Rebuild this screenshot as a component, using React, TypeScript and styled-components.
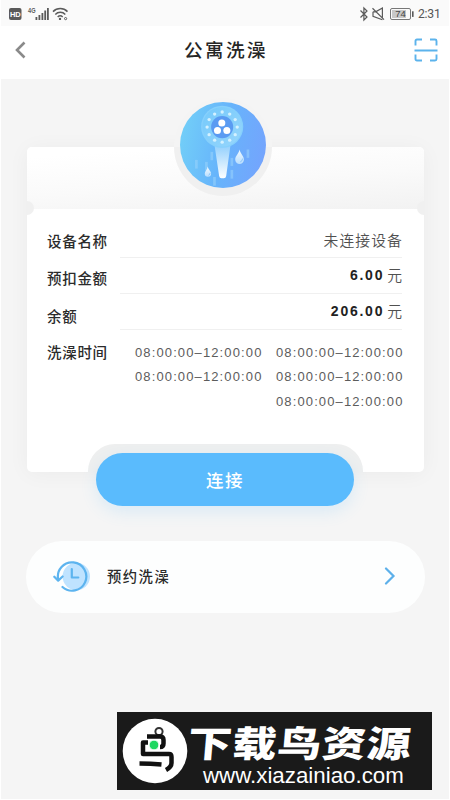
import React from "react";
import styled, { createGlobalStyle } from "styled-components";

const GlobalStyle = createGlobalStyle`
  * { box-sizing: border-box; }
  body { margin: 0; background: #fff; }
`;

const cjk = `"Noto Sans CJK SC", sans-serif`;
const latin = `"Liberation Sans", "Noto Sans CJK SC", sans-serif`;

const Screen = styled.div`
  width: 450px;
  height: 799px;
  padding: 0 1px 0 1px;
  background: #fff;
  font-family: ${cjk};
  color: #2b2b2b;
  overflow: hidden;
`;
const StatusBar = styled.div`
  display: flex;
  justify-content: space-between;
  align-items: center;
  height: 26px;
  padding: 2px 9px 0 8px;
  background: #fafafa;
`;
const StatusGroup = styled.div`
  display: flex;
  align-items: center;
`;
const Clock = styled.span`
  margin-left: 3px;
  width: 22px;
  font: 12.2px/16px Roboto, sans-serif;
  letter-spacing: -0.25px;
  color: #565656;
  white-space: nowrap;
`;
const NavBar = styled.header`
  display: grid;
  grid-template-columns: 40px 1fr 40px;
  align-items: center;
  height: 53px;
  padding: 0 11px 6px 13px;
  background: #fff;
`;
const Title = styled.h1`
  margin: -1px 0 0;
  text-align: center;
  font-size: 18.6px;
  line-height: 28px;
  font-weight: 500;
  letter-spacing: 2.4px;
  color: #262626;
`;
const IconButton = styled.button<{ $end?: boolean }>`
  display: flex;
  justify-content: ${(p) => (p.$end ? "flex-end" : "flex-start")};
  padding: 0;
  border: 0;
  background: none;
`;
const Body = styled.main`
  height: 720px;
  padding: 68px 23px 0 26px;
  background: #f5f5f5;
`;
const Ticket = styled.section`
  position: relative;
  width: 397px;
  height: 325px;
  border-radius: 5px;
  background: #fff;
  box-shadow: 0 2px 22px rgba(0, 0, 0, 0.045);
`;
const TicketTop = styled.div`
  position: relative;
  height: 62px;
  border-radius: 5px 5px 0 0;
  background: linear-gradient(176deg, #fff 12%, #fafafa 55%, #f2f2f2 100%);
`;
const Notch = styled.span<{ $side: "left" | "right" }>`
  position: absolute;
  top: 54px;
  ${(p) => p.$side}: 0;
  width: 7px;
  height: 14px;
  background: #f0f0f0;
  border-radius: ${(p) => (p.$side === "left" ? "0 7px 7px 0" : "7px 0 0 7px")};
`;
const Medallion = styled.div`
  position: absolute;
  left: 147px;
  top: -49px;
  width: 98px;
  height: 98px;
  padding: 4px 0 0 6px;
  border-radius: 50%;
  background: linear-gradient(#f4f4f4 50%, #f0f0f0 50%);
`;
const Details = styled.div`
  padding: 12px 22px 0 20px;
`;
const Row = styled.div<{ $h: number }>`
  display: grid;
  grid-template-columns: 73px 1fr;
  height: ${(p) => p.$h}px;
`;
const Label = styled.span<{ $top: number }>`
  padding-top: ${(p) => p.$top}px;
  font-size: 14.5px;
  line-height: 22px;
  font-weight: 500;
  letter-spacing: 0.7px;
  white-space: nowrap;
`;
const Value = styled.div`
  display: flex;
  justify-content: flex-end;
  align-items: center;
  border-bottom: 1px solid #f0f0f0;
  padding-top: 2px;
  font-size: 14.8px;
  line-height: 20px;
  letter-spacing: 1.1px;
  font-weight: 350;
  color: #505050;
`;
const DeviceName = styled.span`
  margin-right: -1px;
`;
const AmountValue = styled(Value)`
  padding: 0 0 1px;
  letter-spacing: 0;
`;
const Amount = styled.b`
  margin-right: 3px;
  font: 700 14px/20px ${latin};
  letter-spacing: 1.75px;
  color: #222;
`;
const Times = styled.div`
  display: grid;
  grid-template-columns: 127px 127px;
  justify-content: start;
  column-gap: 14px;
  align-content: start;
  grid-auto-rows: 24.4px;
  padding-top: 11px;
  margin-right: -1px;
  direction: rtl;
`;
const Time = styled.span`
  direction: ltr;
  font: 13px/24px ${latin};
  letter-spacing: 1.12px;
  color: #5c5c5c;
  white-space: nowrap;
`;
const ButtonHalo = styled.div`
  position: absolute;
  left: 61px;
  bottom: 0;
  width: 275px;
  height: 28px;
  border-radius: 27px 27px 0 0;
  background: #eeefef;
`;
const ConnectButton = styled.button`
  position: absolute;
  left: 69px;
  top: 306px;
  width: 258px;
  height: 53px;
  padding: 0;
  border: 0;
  border-radius: 27px;
  background: #5abbfd;
  box-shadow: 0 6px 16px rgba(90, 187, 253, 0.16);
  color: #fff;
  font: 500 17.5px/53px ${cjk};
  letter-spacing: 1.6px;
`;
const Reserve = styled.a`
  display: flex;
  align-items: center;
  width: 399px;
  height: 72px;
  margin: 69px 0 0 -1px;
  padding: 0 29px 2px 27px;
  border-radius: 36px;
  background: #fdfefe;
`;
const ReserveText = styled.span`
  flex: 1;
  margin-left: 16px;
  font-size: 14.3px;
  line-height: 22px;
  font-weight: 500;
  letter-spacing: 1.5px;
`;
const Banner = styled.footer`
  display: flex;
  align-items: center;
  width: 315px;
  height: 78px;
  margin: 99px 0 0 90px;
  padding-left: 5px;
  background: #1a1a1a;
  color: #fff;
`;
const BannerText = styled.div`
  margin: 4px 0 0;
  width: 230px;
`;
const BannerName = styled.div`
  font-size: 44px;
  line-height: 40px;
  font-weight: 900;
  letter-spacing: 0.8px;
  white-space: nowrap;
  transform: translateY(3px) skewX(-5deg) scaleY(0.82);
`;
const BannerUrl = styled.div`
  margin: 6px 0 0 15px;
  font: 22.3px/24px ${latin};
  white-space: nowrap;
`;

const SignalIcons = () => (
  <svg width="60" height="16" viewBox="0 0 60 16">
    <rect x="0" y="2" width="12.5" height="12" rx="2" fill="#5a5a5a" />
    <text x="6.3" y="10.9" textAnchor="middle" fontFamily="Liberation Sans" fontWeight="700" fontSize="7.5" fill="#fff">HD</text>
    <text x="19" y="6.6" fontFamily="Liberation Sans" fontWeight="700" fontSize="6.5" textLength="7.5" lengthAdjust="spacingAndGlyphs" fill="#5a5a5a">4G</text>
    <g fill="#5a5a5a">
      <rect x="26.5" y="11" width="1.8" height="3" />
      <rect x="29.5" y="9" width="1.8" height="5" />
      <rect x="32.5" y="7" width="1.8" height="7" />
      <rect x="35.3" y="4.5" width="1.8" height="9.5" />
      <rect x="38" y="2" width="1.8" height="12" />
    </g>
    <g fill="none" stroke="#5a5a5a" strokeWidth="1.5">
      <path d="M44 5.6a10.3 10.3 0 0 1 14.5 0M46.3 8.4a7 7 0 0 1 10 0M48.7 11a3.6 3.6 0 0 1 5 0" />
      <circle cx="56.6" cy="12.6" r="1.1" strokeWidth="1" />
    </g>
    <circle cx="51" cy="12.9" r="1.2" fill="#5a5a5a" />
  </svg>
);

const DeviceIcons = () => (
  <svg width="56" height="16" viewBox="0 0 56 16" fill="none" stroke="#5a5a5a" strokeWidth="1.2">
    <path d="M1.5 4.5 8 11 4.9 14V2L8 5 1.5 11.5" />
    <path d="M14 5.8h2.6L23.4 2v9.5M23.4 13.8 14 10.3V5.8M13.5 2.2 25 13.6" />
    <rect x="31.5" y="2.5" width="20" height="11" rx="1.5" stroke="#777" strokeWidth="1" />
    <rect x="33" y="4" width="14" height="8" fill="#c8c8c8" stroke="none" />
    <rect x="53" y="5.3" width="1.6" height="5.6" fill="#5a5a5a" stroke="none" />
    <text x="41.5" y="11.4" textAnchor="middle" fontFamily="Liberation Sans" fontSize="9.5" fill="#444" stroke="none">74</text>
  </svg>
);

const dots = Array.from({ length: 12 }, (_, i) => {
  const a = (i * Math.PI) / 6 + Math.PI / 2;
  return [173 + 45 * Math.cos(a), 111 + 45 * Math.sin(a)];
});

const ShowerIcon = () => (
  <svg width="86" height="86" viewBox="47 36 257 257">
    <defs>
      <linearGradient id="disc" x1="0" y1="0.4" x2="1" y2="0.6">
        <stop offset="0" stopColor="#72cef8" />
        <stop offset="0.5" stopColor="#67b4fb" />
        <stop offset="1" stopColor="#74a4fd" />
      </linearGradient>
      <linearGradient id="handle" x1="0" y1="0" x2="0" y2="1">
        <stop offset="0" stopColor="#91cffd" />
        <stop offset="1" stopColor="#fff" />
      </linearGradient>
      <linearGradient id="drop" x1="0" y1="0" x2="0" y2="1">
        <stop offset="0" stopColor="#f4fbff" />
        <stop offset="1" stopColor="#b9defe" />
      </linearGradient>
      <linearGradient id="head" x1="0" y1="0" x2="1" y2="1">
        <stop offset="0" stopColor="#74c9fb" />
        <stop offset="1" stopColor="#97d6fc" />
      </linearGradient>
    </defs>
    <circle cx="175.5" cy="164.5" r="128.5" fill="url(#disc)" />
    <g fill="#9bd4fc" opacity="0.55">
      <rect x="92" y="209" width="8" height="26" />
      <rect x="122" y="215" width="8" height="26" />
      <rect x="138" y="185" width="8" height="25" />
      <rect x="146" y="260" width="8" height="26" />
      <rect x="198" y="203" width="8" height="24" />
      <rect x="198" y="239" width="8" height="26" />
      <rect x="246" y="178" width="8" height="25" />
    </g>
    <path d="M150 164h48l-13 93q-1 7-7 7h-7q-6 0-7-7z" fill="url(#handle)" />
    <circle cx="173" cy="110" r="63" fill="#86d0fc" />
    <circle cx="173" cy="110" r="59" fill="url(#head)" />
    <circle cx="173" cy="111" r="33" fill="#5a9bf2" />
    {dots.map(([x, y], i) => (
      <circle key={i} cx={x} cy={y} r="5" fill="#d4f1ff" />
    ))}
    <g fill="#fff">
      <circle cx="172" cy="99" r="10.5" />
      <circle cx="159" cy="121" r="10.5" />
      <circle cx="187" cy="121" r="10.5" />
    </g>
    <path d="M225 178c-3 14-13 19-13 30a13 13 0 0 0 26 0c0-11-10-16-13-30z" fill="url(#drop)" />
    <path d="M130 229c-2 10-9 14-9 21a9.500 9.500 0 0 0 19 0c0-7-8-11-10-21z" fill="url(#drop)" />
    <path d="M234 205q0 8-7 10M137 248q0 5-5 7" fill="none" stroke="#6eb5f8" strokeWidth="2" />
  </svg>
);

const HistoryIcon = () => (
  <svg width="38" height="32" viewBox="0 0 38 32" fill="none" stroke="#5db4ef" strokeWidth="2.200" strokeLinecap="round" strokeLinejoin="round">
    <circle cx="23.300" cy="16.500" r="13.700" fill="#bfe3ff" stroke="none" />
    <path d="M5.200 19.500A14.200 14.200 0 1 1 9.500 27" />
    <path d="M1.300 16.700 5.200 20.600 9.600 16.500" />
    <path d="M18.800 9v8.500h6.500" />
  </svg>
);

const BirdLogo = () => (
  <svg width="66" height="66" viewBox="0 0 66 66">
    <circle cx="33" cy="33" r="32.300" fill="#fff" />
    <circle cx="37" cy="13.500" r="3.600" fill="none" stroke="#333" strokeWidth="2" />
    <g fill="none" stroke="#111" strokeWidth="4.500" strokeLinejoin="round">
      <path d="M25 18.500h13q3.500 0 3.500 3.500v3.500q0 3.500-3.500 3.500" />
      <path d="M26 24.500h-5v11.500h26q2.500 0 2.500 3v6q0 4-5.500 7" />
      <path d="M17.500 45.500q11 0 22 1" />
    </g>
    <circle cx="32" cy="27" r="4.800" fill="#1ed760" stroke="#fff" strokeWidth="0.800" />
  </svg>
);

const slots = [1, 2, 3, 4, 5];

export default function App() {
  return (
    <>
      <GlobalStyle />
      <Screen>
        <StatusBar>
          <StatusGroup><SignalIcons /></StatusGroup>
          <StatusGroup><DeviceIcons /><Clock>2:31</Clock></StatusGroup>
        </StatusBar>
        <NavBar>
          <IconButton aria-label="返回">
            <svg width="12" height="18" viewBox="0 0 12 18" fill="none" stroke="#8a8a8a" strokeWidth="2.600">
              <path d="M10.500 1.500 3 9l7.500 7.500" />
            </svg>
          </IconButton>
          <Title>公寓洗澡</Title>
          <IconButton $end aria-label="扫码">
            <svg width="24" height="24" viewBox="0 0 24 24" fill="none" stroke="#5cb3ec" strokeWidth="1.900">
              <path d="M1.500 7.500V3q0-1.500 1.500-1.500h5M16 1.500h5q1.500 0 1.500 1.500v4.500M22.500 16.500V21q0 1.500-1.500 1.500h-5M8 22.500H3Q1.500 22.500 1.500 21v-4.500M.5 12.500h23" />
            </svg>
          </IconButton>
        </NavBar>
        <Body>
          <Ticket>
            <TicketTop>
              <Notch $side="left" />
              <Notch $side="right" />
              <Medallion><ShowerIcon /></Medallion>
            </TicketTop>
            <Details>
              <Row $h={37}>
                <Label $top={9}>设备名称</Label>
                <Value><DeviceName>未连接设备</DeviceName></Value>
              </Row>
              <Row $h={36}>
                <Label $top={9}>预扣金额</Label>
                <AmountValue><Amount>6.00</Amount>元</AmountValue>
              </Row>
              <Row $h={36}>
                <Label $top={11}>余额</Label>
                <AmountValue><Amount>206.00</Amount>元</AmountValue>
              </Row>
              <Row $h={90}>
                <Label $top={11}>洗澡时间</Label>
                <Times>{slots.map((s) => <Time key={s}>08:00:00–12:00:00</Time>)}</Times>
              </Row>
            </Details>
            <ButtonHalo />
            <ConnectButton>连接</ConnectButton>
          </Ticket>
          <Reserve>
            <HistoryIcon />
            <ReserveText>预约洗澡</ReserveText>
            <svg width="12" height="18" viewBox="0 0 12 18" fill="none" stroke="#5db0ea" strokeWidth="2.200" strokeLinecap="round">
              <path d="M2 1.500 9.500 9 2 16.500" />
            </svg>
          </Reserve>
          <Banner>
            <BirdLogo />
            <BannerText>
              <BannerName>下载鸟资源</BannerName>
              <BannerUrl>www.xiazainiao.com</BannerUrl>
            </BannerText>
          </Banner>
        </Body>
      </Screen>
    </>
  );
}
